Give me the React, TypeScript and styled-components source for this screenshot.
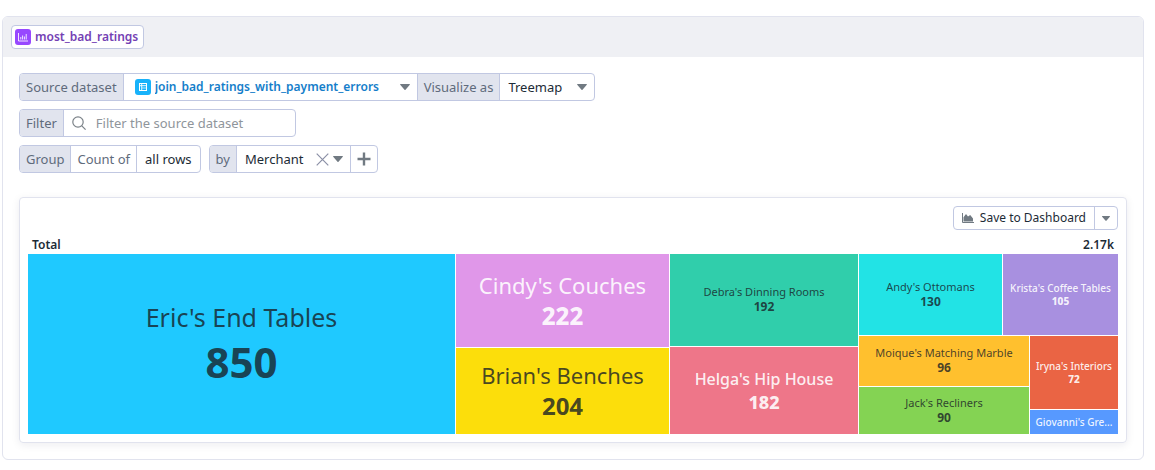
import React from "react";
import styled, { createGlobalStyle } from "styled-components";

const GlobalStyle = createGlobalStyle`
  *, *::before, *::after { box-sizing: border-box; }
  body {
    margin: 0;
    background: #ffffff;
    color: #1c2b36;
    font-family: "Noto Sans", "Open Sans", sans-serif;
    font-size: 13px;
    line-height: 18px;
  }
  button, input, select { font: inherit; color: inherit; margin: 0; }
`;

const line = "#c1c8e2";
const softLine = "#e1e3ee";
const muted = "#5f6b7c";
const iconGrey = "#717a82";

const Panel = styled.section`
  margin: 16px 11px 10px 2px;
  border: 1px solid ${softLine};
  border-radius: 6px;
  background: #ffffff;
`;

const PanelHeader = styled.header`
  display: flex;
  align-items: center;
  height: 40px;
  padding: 0 8px;
  border-radius: 5px 5px 0 0;
  background: #eff0f4;
`;

const NodeTag = styled.button`
  display: flex;
  align-items: center;
  gap: 4px;
  height: 24px;
  padding: 0 5px 0 3px;
  border: 1px solid ${line};
  border-radius: 4px;
  background: #ffffff;
  color: #7441b4;
  font-size: 12px;
  font-weight: 600;
`;

const Tile = styled.span<{ $color: string }>`
  display: flex;
  flex: none;
  align-items: center;
  justify-content: center;
  width: 16px;
  height: 16px;
  border-radius: 3px;
  background: ${(p) => p.$color};
`;

const PanelBody = styled.div`
  display: flex;
  flex-direction: column;
  gap: 24px;
  padding: 16px;
`;

const Controls = styled.form`
  display: flex;
  flex-direction: column;
  gap: 8px;
`;

const ControlRow = styled.div`
  display: flex;
  flex-wrap: wrap;
  gap: 8px;
`;

const ControlGroup = styled.div`
  display: flex;
  height: 28px;
  border: 1px solid ${line};
  border-radius: 4px;
  background: #ffffff;
  overflow: hidden;

  && > * + * { border-left: 1px solid ${line}; }
`;

const GroupLabel = styled.label<{ $plain?: boolean }>`
  display: flex;
  align-items: center;
  padding: 0 6px;
  background: ${(p) => (p.$plain ? "#ffffff" : "#e1e4ee")};
  color: ${muted};
`;

const Picker = styled.div<{ $width: number; $inset?: number }>`
  display: flex;
  align-items: center;
  gap: 4px;
  width: ${(p) => p.$width}px;
  padding: 0 7px 0 ${(p) => p.$inset ?? 8}px;
`;

const Select = styled.select<{ $link?: boolean }>`
  flex: 1;
  min-width: 0;
  height: 26px;
  padding: 0;
  border: 0;
  outline: 0;
  appearance: none;
  background: transparent;
  color: ${(p) => (p.$link ? "#147eca" : "inherit")};
  font-size: ${(p) => (p.$link ? 12 : 13)}px;
  line-height: 26px;
  font-weight: ${(p) => (p.$link ? 600 : 400)};
`;

const SearchField = styled.div`
  display: flex;
  align-items: center;
  gap: 10px;
  width: 232px;
  padding: 0 8px;
`;

const SearchInput = styled.input`
  flex: 1;
  min-width: 0;
  height: 26px;
  padding: 0;
  border: 0;
  outline: 0;
  background: transparent;
  &::placeholder { color: #8f959b; opacity: 1; }
`;

const PlainButton = styled.button<{ $pad?: number }>`
  display: flex;
  align-items: center;
  gap: 6px;
  padding: 0 ${(p) => p.$pad ?? 0}px;
  border: 0;
  background: transparent;
`;

const Card = styled.section`
  display: flex;
  flex-direction: column;
  padding: 8px;
  border: 1px solid ${softLine};
  border-radius: 4px;
  box-shadow: 0 2px 8px rgba(30, 30, 70, 0.08);
`;

const CardActions = styled.div`
  display: flex;
  justify-content: flex-end;
`;

const ActionGroup = styled(ControlGroup)`
  height: 24px;
  font-size: 12px;
`;

const Totals = styled.div`
  display: flex;
  justify-content: space-between;
  padding: 6px 4px 0;
  font-size: 12px;
  font-weight: 600;
`;

const Split = styled.div<{ $columns?: string; $rows?: string }>`
  display: grid;
  gap: 1px;
  min-width: 0;
  min-height: 0;
  grid-template-columns: ${(p) => p.$columns ?? "minmax(0, 1fr)"};
  grid-template-rows: ${(p) => p.$rows ?? "minmax(0, 1fr)"};
`;

const Treemap = styled(Split)`
  height: 180px;
`;

type Size = "xl" | "lg" | "md" | "sm" | "xs";

const sizes: Record<Size, { name: number; nameLine: number; value: number; valueLine: number }> = {
  xl: { name: 25, nameLine: 36, value: 42, valueLine: 54 },
  lg: { name: 22, nameLine: 30, value: 24, valueLine: 32 },
  md: { name: 16, nameLine: 22, value: 18, valueLine: 24 },
  sm: { name: 11, nameLine: 14, value: 12, valueLine: 16 },
  xs: { name: 10, nameLine: 13, value: 10, valueLine: 13 },
};

const Cell = styled.div<{ $color: string; $light?: boolean }>`
  display: flex;
  flex-direction: column;
  align-items: center;
  justify-content: center;
  min-width: 0;
  min-height: 0;
  padding: 0 4px;
  background: ${(p) => p.$color};
  color: ${(p) => (p.$light ? "rgba(255, 255, 255, 0.9)" : "rgba(24, 32, 38, 0.8)")};
  overflow: hidden;
  white-space: nowrap;
`;

const CellName = styled.span<{ $size: Size; $light?: boolean }>`
  font-size: ${(p) => sizes[p.$size].name}px;
  line-height: ${(p) => sizes[p.$size].nameLine}px;
  font-weight: ${(p) => (p.$light && p.$size !== "lg" ? 500 : 400)};
`;

const CellValue = styled.strong<{ $size: Size; $light?: boolean }>`
  font-size: ${(p) => sizes[p.$size].value}px;
  line-height: ${(p) => sizes[p.$size].valueLine}px;
  font-weight: ${(p) => (p.$light ? 800 : 700)};
`;

interface MerchantProps {
  name: string;
  value?: number;
  color: string;
  size: Size;
  light?: boolean;
}

const Merchant = ({ name, value, color, size, light }: MerchantProps) => (
  <Cell $color={color} $light={light}>
    <CellName $size={size} $light={light}>{name}</CellName>
    {value !== undefined && <CellValue $size={size} $light={light}>{value}</CellValue>}
  </Cell>
);

const IconSvg = styled.svg`
  flex: none;
`;

const Caret = ({ small }: { small?: boolean }) => (
  <IconSvg width={small ? 8 : 10} height={small ? 5 : 6} viewBox="0 0 10 6" aria-hidden="true">
    <path d="M.6 0h8.8c.5 0 .7.5.4.8L5.5 5.7a.7.7 0 0 1-1 0L.2.8C-.1.5.1 0 .6 0z" fill={iconGrey} />
  </IconSvg>
);

const ChartIcon = () => (
  <IconSvg width="10" height="10" viewBox="0 0 10 10" fill="none" stroke="#fff" strokeOpacity=".85" aria-hidden="true">
    <path d="M.5 1v8H10" />
    <path d="M2.8 7.5V5M4.6 7.5V3.5M6.4 7.5V4.5M8.2 7.5V2" />
  </IconSvg>
);

const TableIcon = () => (
  <IconSvg width="10" height="10" viewBox="0 0 10 10" fill="none" stroke="#fff" aria-hidden="true">
    <rect x="1.5" y="1.5" width="7" height="7" />
    <path d="M3.7 1.5v7M1.5 3.7h7" strokeWidth=".9" />
    <path d="M4 6h4.5" strokeWidth=".7" />
  </IconSvg>
);

const SearchIcon = () => (
  <IconSvg width="14" height="14" viewBox="0 0 14 14" fill="none" stroke="#7b8288" strokeWidth="1.2" aria-hidden="true">
    <circle cx="6" cy="6" r="5.2" />
    <path d="M9.8 9.8l3.8 3.8" />
  </IconSvg>
);

const CrossIcon = () => (
  <IconSvg width="13" height="13" viewBox="0 0 13 13" fill="none" stroke="#8b90a6" strokeWidth="1.2" aria-hidden="true">
    <path d="M.7.7l11.6 11.6M12.3.7L.7 12.3" />
  </IconSvg>
);

const PlusIcon = () => (
  <IconSvg width="14" height="14" viewBox="0 0 14 14" fill="none" stroke={iconGrey} strokeWidth="2.4" aria-hidden="true">
    <path d="M7 .5v13M.5 7h13" />
  </IconSvg>
);

const AreaIcon = () => (
  <IconSvg width="12" height="10" viewBox="0 0 12 10" aria-hidden="true">
    <path d="M.5 0v9.5H12" fill="none" stroke={iconGrey} />
    <path d="M1.5 8.5V4.2L4 1l2 2.4L8.2 2 11 5.5v3z" fill={iconGrey} />
  </IconSvg>
);

export default function App() {
  return (
    <>
      <GlobalStyle />
      <Panel>
        <PanelHeader>
          <NodeTag type="button">
            <Tile $color="#9748ff"><ChartIcon /></Tile>
            most_bad_ratings
          </NodeTag>
        </PanelHeader>
        <PanelBody>
          <Controls onSubmit={(e) => e.preventDefault()}>
            <ControlRow>
              <ControlGroup>
                <GroupLabel htmlFor="source">Source dataset</GroupLabel>
                <Picker $width={294} $inset={11}>
                  <Tile $color="#18b2fa"><TableIcon /></Tile>
                  <Select id="source" $link>
                    <option>join_bad_ratings_with_payment_errors</option>
                  </Select>
                  <Caret />
                </Picker>
                <GroupLabel htmlFor="visual">Visualize as</GroupLabel>
                <Picker $width={95}>
                  <Select id="visual">
                    <option>Treemap</option>
                  </Select>
                  <Caret />
                </Picker>
              </ControlGroup>
            </ControlRow>
            <ControlRow>
              <ControlGroup>
                <GroupLabel htmlFor="filter">Filter</GroupLabel>
                <SearchField>
                  <SearchIcon />
                  <SearchInput id="filter" type="text" placeholder="Filter the source dataset" />
                </SearchField>
              </ControlGroup>
            </ControlRow>
            <ControlRow>
              <ControlGroup>
                <GroupLabel as="span">Group</GroupLabel>
                <GroupLabel as="span" $plain>Count of</GroupLabel>
                <PlainButton type="button" $pad={8}>all rows</PlainButton>
              </ControlGroup>
              <ControlGroup>
                <GroupLabel htmlFor="by">by</GroupLabel>
                <Picker $width={114}>
                  <Select id="by">
                    <option>Merchant</option>
                  </Select>
                  <PlainButton type="button" aria-label="Clear merchant"><CrossIcon /></PlainButton>
                  <Caret />
                </Picker>
                <PlainButton type="button" $pad={6} aria-label="Add grouping"><PlusIcon /></PlainButton>
              </ControlGroup>
            </ControlRow>
          </Controls>
          <Card>
            <CardActions>
              <ActionGroup>
                <PlainButton type="button" $pad={8}>
                  <AreaIcon />
                  Save to Dashboard
                </PlainButton>
                <PlainButton type="button" $pad={7} aria-label="More save options"><Caret small /></PlainButton>
              </ActionGroup>
            </CardActions>
            <Totals>
              <span>Total</span>
              <span>2.17k</span>
            </Totals>
            <Treemap $columns="427fr 213fr 188fr 259fr">
              <Merchant name="Eric's End Tables" value={850} color="#1fc9ff" size="xl" />
              <Split $rows="93fr 86fr">
                <Merchant name="Cindy's Couches" value={222} color="#e097e9" size="lg" light />
                <Merchant name="Brian's Benches" value={204} color="#fcde0b" size="lg" />
              </Split>
              <Split $rows="92fr 87fr">
                <Merchant name="Debra's Dinning Rooms" value={192} color="#30ceab" size="sm" />
                <Merchant name="Helga's Hip House" value={182} color="#ee7689" size="md" light />
              </Split>
              <Split $rows="81fr 98fr">
                <Split $columns="143fr 115fr">
                  <Merchant name="Andy's Ottomans" value={130} color="#22e3e5" size="sm" />
                  <Merchant name="Krista's Coffee Tables" value={105} color="#a890e0" size="xs" light />
                </Split>
                <Split $columns="170fr 88fr">
                  <Split $rows="50fr 47fr">
                    <Merchant name="Moique's Matching Marble" value={96} color="#ffc02e" size="sm" />
                    <Merchant name="Jack's Recliners" value={90} color="#84d353" size="sm" />
                  </Split>
                  <Split $rows="73fr 24fr">
                    <Merchant name="Iryna's Interiors" value={72} color="#ea6444" size="xs" light />
                    <Merchant name="Giovanni's Gre..." color="#5799ff" size="xs" light />
                  </Split>
                </Split>
              </Split>
            </Treemap>
          </Card>
        </PanelBody>
      </Panel>
    </>
  );
}
